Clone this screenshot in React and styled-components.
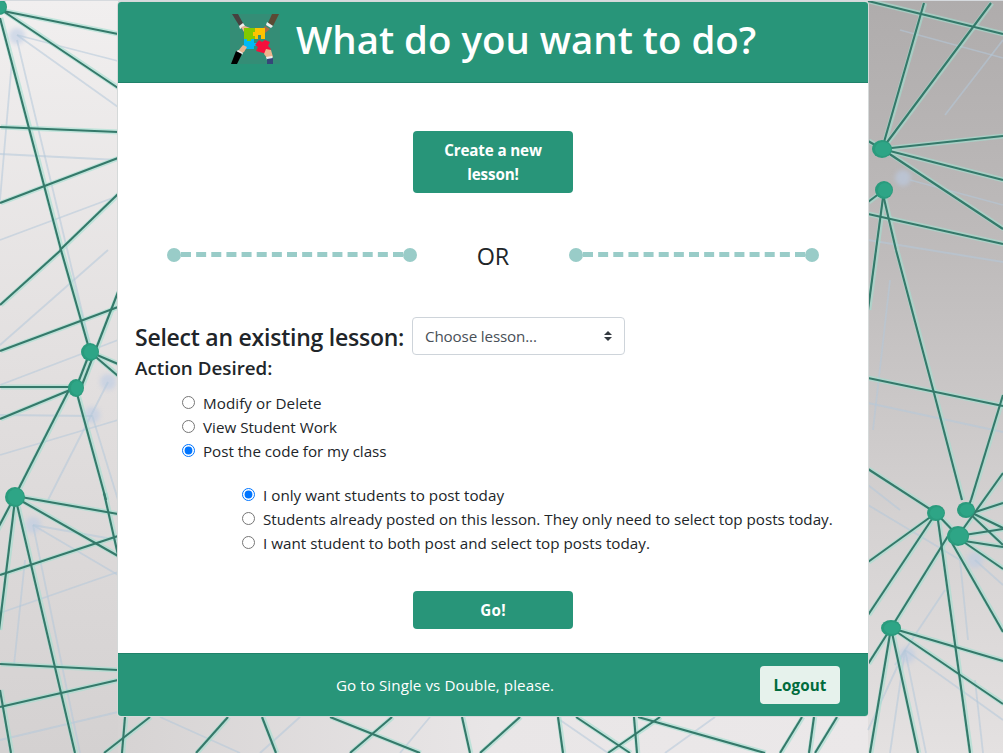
import React, { useState } from "react";
import styled, { createGlobalStyle } from "styled-components";

const green = "#289579";

const GlobalStyle = createGlobalStyle`
  * { box-sizing: border-box; }
  body {
    margin: 0;
    overflow: hidden;
    font-family: "Open Sans", "Noto Sans", sans-serif;
    font-size: 15.2px;
    line-height: 24px;
    color: #212529;
    background: #dcd9d9;
  }
`;

const Backdrop = styled.svg`
  position: fixed;
  inset: 0;
  z-index: -1;
  width: 1003px;
  height: 753px;
`;

const Page = styled.main`
  height: 753px;
  padding-top: 1px;
  padding-left: 117px;
`;

const Card = styled.section`
  width: 752px;
  border: 1px solid #d5d9d9;
  border-radius: 4px;
  background: #fff;
  overflow: hidden;
`;

const Header = styled.header`
  display: flex;
  align-items: center;
  height: 81px;
  padding: 0 0 6px 112px;
  gap: 16px;
  background: ${green};
  border-bottom: 1px solid #20826a;
`;

const Title = styled.h1`
  margin: 0;
  font-size: 38.4px;
  font-weight: 600;
  line-height: 48px;
  white-space: nowrap;
  color: #fff;
`;

const Body = styled.div`
  display: flex;
  flex-direction: column;
  height: 570px;
  padding: 48px 17px 24px;
`;

const Button = styled.button`
  align-self: center;
  width: 160px;
  padding: 7px 24px;
  border: 0;
  border-radius: 4px;
  font: 700 15.2px/24px "Open Sans", "Noto Sans", sans-serif;
  letter-spacing: ${(p) => p.$spacing || "0"};
  color: #fff;
  background: ${green};
`;

const LogoutButton = styled(Button)`
  width: 80px;
  padding: 7px 0;
  color: #006b3c;
  background: #e6f2ec;
`;

const Divider = styled.div`
  display: flex;
  align-items: center;
  justify-content: space-between;
  margin: 43px 32px 41px;
  height: 40px;
  font-size: 23.4px;
  font-weight: 500;
  line-height: 40px;
`;

const Dashes = styled.div`
  display: flex;
  align-items: center;
  margin-bottom: 3px;
  &::before, &::after {
    content: "";
    width: 14px;
    height: 14px;
    border-radius: 50%;
    background: #99ccc8;
  }
`;

const DashLine = styled.span`
  width: 222px;
  border-top: 5px dashed #99ccc8;
`;

const SelectRow = styled.div`
  display: flex;
  align-items: center;
  height: 38px;
`;

const SelectLabel = styled.h2`
  margin: 2px 0 0;
  width: 277px;
  font-size: 23px;
  font-weight: 600;
  line-height: 29px;
  letter-spacing: -0.24px;
  white-space: nowrap;
`;

const Select = styled.div`
  display: flex;
  align-items: center;
  justify-content: space-between;
  width: 213px;
  height: 38px;
  padding: 0 12px;
  border: 1px solid #ced4da;
  border-radius: 4px;
  letter-spacing: -0.15px;
  color: #495057;
`;

const ActionLabel = styled.h3`
  margin: 1px 0 11px;
  font-size: 18.8px;
  font-weight: 600;
  line-height: 24px;
`;

const RadioGroup = styled.div`
  padding-left: ${(p) => p.$indent}px;
  margin-bottom: ${(p) => p.$gap}px;
`;

const RadioRow = styled.label`
  display: flex;
  align-items: center;
  height: 24px;
  gap: 8px;
  white-space: nowrap;
  letter-spacing: ${(p) => p.$spacing || "0"};
`;

const Radio = styled.input`
  flex: none;
  width: 13px;
  height: 13px;
  margin: 0 0 2px;
`;

const Footer = styled.footer`
  display: flex;
  align-items: center;
  height: 63px;
  padding-left: 218px;
  color: #fff;
  background: ${green};
  border-top: 1px solid #20826a;
`;

const FooterText = styled.p`
  margin: 0;
  width: 424px;
  letter-spacing: 0.06px;
`;

const strands = [
  [3, 11, 118, 34], [3, 11, 118, 88], [0, 18, 61, 250], [0, 127, 118, 132], [0, 203, 118, 158],
  [60, 250, 118, 194], [61, 250, 90, 352], [0, 305, 61, 250], [0, 351, 118, 307], [118, 292, 82, 385],
  [90, 352, 76, 388], [90, 352, 118, 364], [90, 352, 118, 376], [0, 387, 70, 387], [0, 419, 70, 390],
  [70, 388, 17, 492], [76, 390, 106, 500], [15, 496, 118, 514], [15, 496, -3, 530], [15, 500, -1, 630],
  [15, 496, 75, 753], [18, 499, 118, 556], [0, 575, 118, 536], [104, 493, 118, 555], [0, 664, 118, 670],
  [0, 707, 118, 680], [0, 690, 11, 753], [104, 753, 150, 717], [125, 717, 122, 753],
  [868, 1, 1003, 34], [924, 3, 882, 149], [991, 3, 882, 149], [882, 149, 1003, 136], [882, 149, 1003, 180],
  [882, 149, 1003, 229], [884, 190, 868, 202], [868, 214, 1003, 244], [884, 190, 868, 310],
  [882, 190, 896, 250], [896, 250, 934, 393], [934, 393, 962, 500], [868, 141, 882, 149],
  [868, 378, 1003, 406], [868, 469, 936, 513],
  [1003, 395, 971, 500], [1003, 473, 958, 536], [971, 500, 966, 512], [936, 513, 868, 562],
  [936, 513, 868, 615], [937, 513, 970, 753], [948, 536, 891, 628], [936, 513, 958, 536],
  [952, 543, 1003, 632], [958, 536, 1003, 529], [958, 540, 1003, 547], [958, 538, 1003, 569],
  [966, 515, 1003, 503], [966, 510, 1003, 528], [966, 510, 1003, 545], [891, 628, 1003, 661],
  [891, 628, 1003, 704], [891, 628, 870, 753], [891, 628, 918, 753], [891, 628, 868, 664],
  [576, 717, 630, 753], [634, 717, 637, 753], [638, 717, 765, 753], [660, 717, 608, 753],
  [802, 717, 780, 753], [814, 717, 809, 753], [837, 717, 815, 753], [558, 717, 563, 753],
  [228, 717, 196, 753], [262, 717, 276, 753], [330, 717, 420, 753], [392, 717, 350, 753],
  [462, 717, 470, 753], [520, 717, 480, 753],
];

const shadows = [
  [17, 35, 118, 61], [17, 35, 118, 107], [12, 60, 0, 200], [17, 40, 90, 345], [0, 154, 118, 160],
  [0, 240, 118, 196], [0, 345, 108, 250], [0, 385, 118, 340], [108, 382, 48, 500], [0, 415, 92, 416],
  [0, 455, 118, 420], [92, 415, 118, 500], [33, 525, 118, 575], [0, 613, 118, 572], [25, 560, 14, 665],
  [33, 525, 80, 753], [0, 740, 118, 712], [33, 525, 118, 540], [890, 280, 873, 430], [868, 403, 1003, 432],
  [1003, 40, 945, 115], [900, 30, 1003, 58], [868, 240, 1003, 262], [910, 180, 1003, 205],
  [868, 485, 900, 510], [960, 560, 968, 640], [945, 590, 895, 665], [905, 650, 1003, 720],
  [905, 650, 926, 753], [905, 650, 868, 730], [905, 650, 890, 753], [975, 560, 1003, 585],
  [975, 680, 983, 753], [560, 720, 608, 753], [715, 717, 665, 753], [868, 505, 960, 560],
  [160, 717, 240, 753], [300, 717, 260, 753], [430, 717, 400, 753],
];

const joints = [
  [-1, 7, 8, 8], [90, 352, 9, 9], [76, 388, 8, 9], [15, 497, 10, 10], [882, 149, 10, 9],
  [884, 190, 9, 9], [936, 513, 9, 8], [966, 510, 9, 8], [958, 536, 11, 10], [891, 628, 10, 8],
];

const haze = [[17, 36], [108, 382], [92, 415], [33, 525], [903, 178], [975, 560], [907, 655]];

function NetworkBackdrop() {
  return (
    <Backdrop viewBox="0 0 1003 753">
      <defs>
        <linearGradient id="leftShade" x1="0" y1="0" x2="0" y2="1">
          <stop offset="0" stopColor="#f1efef" />
          <stop offset=".5" stopColor="#e2dfdf" />
          <stop offset="1" stopColor="#d4d1d1" />
        </linearGradient>
        <linearGradient id="rightShade" x1="0" y1="0" x2="0" y2="1">
          <stop offset="0" stopColor="#afacac" />
          <stop offset=".35" stopColor="#bfbcbc" />
          <stop offset=".7" stopColor="#d5d2d2" />
          <stop offset="1" stopColor="#e4e1e1" />
        </linearGradient>
        <linearGradient id="bottomShade">
          <stop offset="0" stopColor="#d6d3d3" />
          <stop offset=".5" stopColor="#e9e6e7" />
          <stop offset="1" stopColor="#ebe8e9" />
        </linearGradient>
        <filter id="soft"><feGaussianBlur stdDeviation=".7" /></filter>
        <filter id="haze"><feGaussianBlur stdDeviation="2" /></filter>
      </defs>
      <rect width="118" height="753" fill="url(#leftShade)" />
      <rect x="118" y="700" width="750" height="53" fill="url(#bottomShade)" />
      <rect x="868" width="135" height="753" fill="url(#rightShade)" />
      <g filter="url(#haze)">
        {haze.map(([x, y], i) => <circle key={i} cx={x} cy={y} r="8" fill="#bccbe4" opacity=".6" />)}
      </g>
      <g filter="url(#soft)">
        {shadows.map(([a, b, c, d], i) => (
          <line key={i} x1={a} y1={b} x2={c} y2={d} stroke="#b4c8da" strokeWidth="1.8" opacity=".55" />
        ))}
        {strands.map(([a, b, c, d], i) => (
          <line key={i} x1={a + 0.8} y1={b} x2={c + 0.8} y2={d} stroke="#a2dfd0" strokeWidth="5" opacity=".6" />
        ))}
        {strands.map(([a, b, c, d], i) => (
          <line key={i} x1={a} y1={b} x2={c} y2={d} stroke="#34796a" strokeWidth="2.1" />
        ))}
        {joints.map(([x, y, rx, ry], i) => (
          <g key={i}>
            <ellipse cx={x} cy={y} rx={rx} ry={ry} fill="#2b9b7d" />
            <ellipse cx={x + 1} cy={y} rx={rx - 2} ry={ry - 2} fill="#2fa586" />
          </g>
        ))}
      </g>
      <rect width="1003" height="1" fill="#d6dade" />
    </Backdrop>
  );
}

function PuzzleLogo() {
  return (
    <svg width="50" height="50" viewBox="0 0 50 50">
      <rect width="50" height="50" fill="#348d76" />
      <path d="M2 0H8L14 11L10 13Z" fill="#47413f" />
      <path d="M9 12L13 9L15 12L10 15Z" fill="#eee" />
      <path d="M11 13L15 12L20 14V17L14 18Z" fill="#edb58f" />
      <path d="M42 0H49L43 12L38 9Z" fill="#5b4a34" />
      <path d="M37 8L43 12L41 14L36 11Z" fill="#eee" />
      <path d="M35 12L40 15L35 19L31 17Z" fill="#a76b48" />
      <path d="M14 14H25V18H27V22H25V25H21V27H17V25H14Z" fill="#82c900" />
      <path d="M25 14H35V25H31V21H28V25H25V22H23V18H25Z" fill="#fdc300" />
      <path d="M14 25H17V27H21V25H24V29H27V32H24V35H14Z" fill="#00b9f5" />
      <path d="M29 26L32 28L35 26L40 28L38 32L41 35L37 40L26 37L28 33L25 31Z" fill="#f5103c" />
      <path d="M13 31L17 33L14 38L10 40L8 37Z" fill="#e7b48e" />
      <path d="M8 36L13 39L12 41L6 38Z" fill="#eee" />
      <path d="M6 37L12 40L7 50H1Z" fill="#000" />
      <path d="M36 35L41 36L43 43L37 44L34 40Z" fill="#efb48e" />
      <path d="M36 43L42 42L43 45L37 46Z" fill="#eee" />
      <path d="M37 45L43 44V50H37Z" fill="#354779" />
    </svg>
  );
}

function DashedRule() {
  return <Dashes><DashLine /></Dashes>;
}

const actions = [["Modify or Delete", "0.06px"], ["View Student Work", "0"], ["Post the code for my class", "-0.03px"]];
const postings = [
  ["I only want students to post today", "0.03px"],
  ["Students already posted on this lesson. They only need to select top posts today.", "0"],
  ["I want student to both post and select top posts today.", "0.02px"],
];

function Choices({ name, items, initial, indent, gap }) {
  const [selected, setSelected] = useState(initial);
  return (
    <RadioGroup $indent={indent} $gap={gap}>
      {items.map(([text, spacing], i) => (
        <RadioRow key={text} $spacing={spacing}>
          <Radio type="radio" name={name} checked={selected === i} onChange={() => setSelected(i)} />
          {text}
        </RadioRow>
      ))}
    </RadioGroup>
  );
}

export default function App() {
  return (
    <>
      <GlobalStyle />
      <NetworkBackdrop />
      <Page>
        <Card>
          <Header>
            <PuzzleLogo />
            <Title>What do you want to do?</Title>
          </Header>
          <Body>
            <Button $spacing="-0.15px">Create a new lesson!</Button>
            <Divider><DashedRule />OR<DashedRule /></Divider>
            <SelectRow>
              <SelectLabel>Select an existing lesson:</SelectLabel>
              <Select>
                Choose lesson...
                <svg width="8" height="10" viewBox="0 0 4 5">
                  <path fill="#343a40" d="M2 0L0 2h4zm0 5L0 3h4z" />
                </svg>
              </Select>
            </SelectRow>
            <ActionLabel>Action Desired:</ActionLabel>
            <Choices name="action" items={actions} initial={2} indent={47} gap={20} />
            <Choices name="posting" items={postings} initial={0} indent={107} gap={36} />
            <Button $spacing="0.3px">Go!</Button>
          </Body>
          <Footer>
            <FooterText>Go to Single vs Double, please.</FooterText>
            <LogoutButton $spacing="0.1px">Logout</LogoutButton>
          </Footer>
        </Card>
      </Page>
    </>
  );
}
